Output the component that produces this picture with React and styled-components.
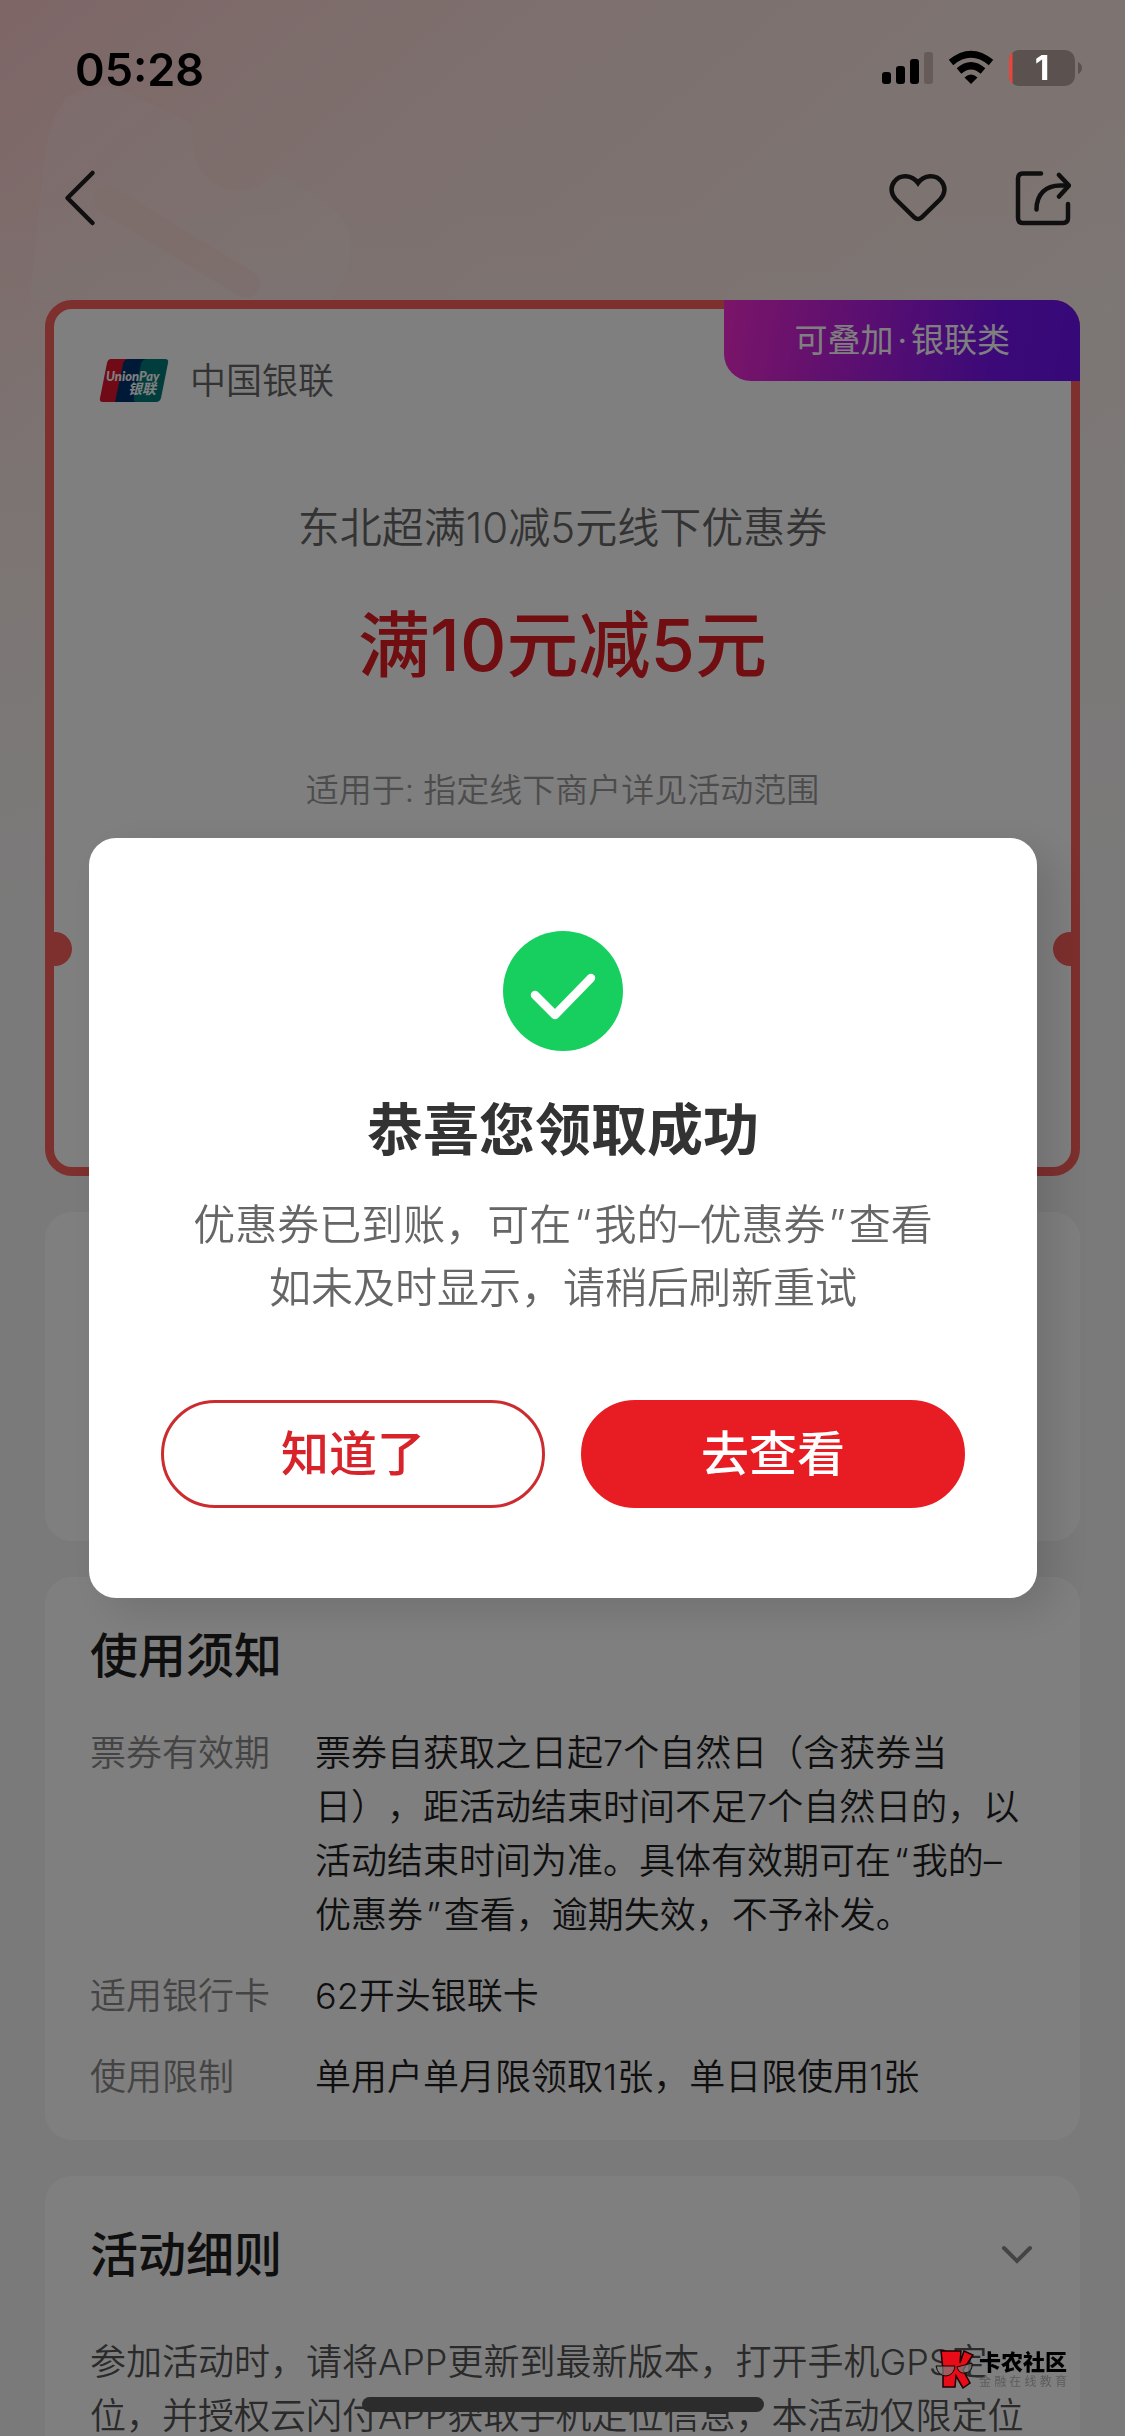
import React from "react";
import styled, { createGlobalStyle } from "styled-components";

const GlobalStyle = createGlobalStyle`
  * {
    box-sizing: border-box;
    margin: 0;
    padding: 0;
  }

  body {
    font-family: Inter, "Noto Sans CJK SC", sans-serif;
    font-weight: 350;
    text-spacing-trim: space-all;
    background-color: #f5f5f5;
  }

  button {
    font-family: inherit;
    cursor: pointer;
  }
`;

const Page = styled.div`
  position: relative;
  height: 100vh;
  overflow: hidden;
  padding: 132px 45px 0;
  background: linear-gradient(
      180deg,
      rgba(245, 245, 245, 0) 200px,
      rgba(245, 245, 245, 0.4) 500px,
      #f5f5f5 960px
    ),
    linear-gradient(140deg, #fdcbcd 0%, #fcd2d2 4%, #fbd9d6 8%, #fbe0dc 14%, #fbe8e3 28%, #f9ece8 38%, #f5f5f5 100%);
  background-color: #f5f5f5;
`;

const Ghost = styled.svg`
  position: absolute;
  top: 60px;
  left: 0;
`;

const NavBar = styled.header`
  position: relative;
  display: flex;
  align-items: center;
  justify-content: space-between;
  height: 132px;
  padding: 0 9px 0 18px;
`;

const NavGroup = styled.div`
  display: flex;
  gap: 66px;
`;

const IconButton = styled.button`
  display: flex;
  border: none;
  background: none;
  color: #1e1e1e;
`;

const Main = styled.main`
  position: relative;
  display: flex;
  flex-direction: column;
  gap: 36px;
  padding-top: 36px;
`;

const Coupon = styled.section`
  position: relative;
  border: 9px solid #fa605c;
  border-radius: 27px;
  background-color: white;
  text-align: center;
`;

const Tag = styled.span`
  position: absolute;
  top: -9px;
  right: -9px;
  display: flex;
  gap: 4px;
  padding: 0 70px;
  border-radius: 0 27px 0 27px;
  background: linear-gradient(100deg, #f62ad2 0%, #7814f0 75%, #6c12f0 100%);
  color: white;
  font-size: 33px;
  font-weight: 400;
  line-height: 81px;
`;

const Issuer = styled.div`
  display: flex;
  align-items: center;
  gap: 21px;
  padding: 45px 45px 0;
  color: #666;
  font-size: 36px;
  line-height: 54px;
`;

const CouponName = styled.p`
  margin-top: 88px;
  color: #666;
  font-size: 42px;
  line-height: 63px;
`;

const Discount = styled.h1`
  margin-top: 32px;
  color: #e21c23;
  font-size: 72px;
  font-weight: 500;
  line-height: 108px;
`;

const Scope = styled.p`
  margin-top: 64px;
  color: #999;
  font-size: 33px;
  line-height: 54px;
`;

const TearLine = styled.div`
  display: flex;
  justify-content: space-between;
  margin-top: 115px;
  margin-bottom: 201px;
`;

const Notch = styled.i`
  width: 18px;
  height: 34px;
  border-radius: ${(props) => (props.$right ? "18px 0 0 18px" : "0 18px 18px 0")};
  background-color: #fa605c;
`;

const Card = styled.section`
  min-height: ${(props) => props.$minHeight || "0"};
  padding: 45px 45px 36px;
  border-radius: 27px;
  background-color: white;
`;

const CardHeader = styled.div`
  display: flex;
  align-items: center;
  justify-content: space-between;
  margin-bottom: ${(props) => props.$space};
`;

const CardTitle = styled.h2`
  color: #1e1e1e;
  font-size: 48px;
  font-weight: 500;
  line-height: 68px;
`;

const Rules = styled.dl`
  display: grid;
  grid-template-columns: 180px 1fr;
  column-gap: 45px;
  row-gap: 27px;
  padding-right: 9px;
  font-size: 36px;
  line-height: 54px;
`;

const Term = styled.dt`
  color: #888;
`;

const Detail = styled.dd`
  color: #1e1e1e;
`;

const Paragraph = styled.p`
  color: #555;
  font-size: 36px;
  line-height: 54px;
`;

const Quote = styled.span`
  padding: 0 3px;
`;

const Overlay = styled.div`
  position: fixed;
  inset: 0;
  display: flex;
  align-items: center;
  justify-content: center;
  padding: 0 88px 0 89px;
  background-color: rgba(0, 0, 0, 0.5);
`;

const Modal = styled.div`
  display: flex;
  flex-direction: column;
  align-items: center;
  width: 100%;
  padding: 93px 72px 90px;
  border-radius: 27px;
  background-color: white;
  box-shadow: 18px 12px 42px rgba(0, 0, 0, 0.12);
`;

const ModalTitle = styled.h2`
  margin-top: 39px;
  color: #333;
  font-size: 56px;
  font-weight: 700;
  line-height: 81px;
`;

const ModalText = styled.p`
  margin-top: 22px;
  color: #666;
  font-size: 42px;
  line-height: 63px;
  text-align: center;
`;

const ModalActions = styled.div`
  display: flex;
  gap: 36px;
  width: 100%;
  margin-top: 81px;
`;

const Button = styled.button`
  flex: 1;
  height: 108px;
  border: 3px solid ${(props) => (props.$primary ? "#e81d23" : "#cc2b30")};
  border-radius: 54px;
  background-color: ${(props) => (props.$primary ? "#e81d23" : "white")};
  color: ${(props) => (props.$primary ? "white" : "#d9232b")};
  font-size: 48px;
  font-weight: 500;
  line-height: 102px;
`;

const StatusBar = styled.div`
  position: fixed;
  top: 0;
  left: 0;
  right: 0;
  display: flex;
  align-items: center;
  justify-content: space-between;
  height: 138px;
  padding: 0 42px 0 75px;
`;

const Time = styled.time`
  font-size: 45px;
  font-weight: 600;
  color: black;
`;

const HomeIndicator = styled.div`
  position: fixed;
  bottom: 24px;
  left: 50%;
  width: 402px;
  height: 15px;
  margin-left: -201px;
  border-radius: 8px;
  background-color: #2c2c2c;
`;

const Watermark = styled.div`
  position: fixed;
  right: 58px;
  bottom: 46px;
  display: flex;
  align-items: center;
  gap: 4px;
`;

const WatermarkName = styled.p`
  color: black;
  font-size: 22px;
  font-weight: 900;
  line-height: 24px;
`;

const WatermarkNote = styled.p`
  display: flex;
  justify-content: space-between;
  color: #5c5c5c;
  font-size: 12px;
  font-weight: 400;
  line-height: 16px;
`;

const SignalIcons = () => (
  <svg width="202" height="38" viewBox="0 0 202 38">
    <rect x="1" y="22" width="9" height="12" rx="3" />
    <rect x="15" y="16" width="9" height="18" rx="3" />
    <rect x="29" y="9" width="9" height="25" rx="3" />
    <rect x="43" y="2" width="9" height="32" rx="3" fill="#665b59" />
    <g fill="none" stroke="#000">
      <path d="M70 12.500 Q90 -4 110 12.500" strokeWidth="7" />
      <path d="M78 21 Q90 10.500 102 21" strokeWidth="7" />
    </g>
    <path d="M83.500 27.500 Q90 21.500 96.500 27.500 L90 34 Z" />
    <rect x="128" y="0" width="66" height="36" rx="10" fill="#5b5250" />
    <path d="M131.500 2 V34 Q128 31 128 26 V10 Q128 5 131.500 2Z" fill="#e8463c" />
    <path d="M197 12 Q201 14 201 18 Q201 22 197 24Z" fill="#5b5250" />
    <text
      x="161"
      y="30"
      fill="#fff"
      fontFamily="Inter, sans-serif"
      fontSize="34"
      fontWeight="700"
      textAnchor="middle"
    >
      1
    </text>
  </svg>
);

const BackIcon = () => (
  <svg width="34" height="58" viewBox="0 0 34 58" fill="none" stroke="currentColor" strokeWidth="4.500">
    <path d="M29.500 4 L4.500 29 L29.500 54" strokeLinecap="round" strokeLinejoin="round" />
  </svg>
);

const HeartIcon = () => (
  <svg width="60" height="56" viewBox="0 0 60 56" fill="none" stroke="currentColor" strokeWidth="4.500">
    <path
      d="M29 13 C23 4.500 11 4 5.500 11.500 C1 17 2 24 6.500 29 L25.500 47.500 Q29 50.500 32.500 47.500 L51.500 29 C56 24 57 17 52.500 11.500 C47 4 35 4.500 29 13Z"
      strokeLinejoin="miter"
    />
  </svg>
);

const ShareIcon = () => (
  <svg
    width="56"
    height="56"
    viewBox="0 0 56 56"
    fill="none"
    stroke="currentColor"
    strokeWidth="4.500"
    strokeLinecap="round"
    strokeLinejoin="round"
  >
    <path d="M26 3.500 H8 Q3 3.500 3 8.500 V48 Q3 53 8 53 H48 Q53 53 53 48 V34" />
    <path d="M21.500 39.500 C21.500 24 31 15.500 45 15.500 H53" />
    <path d="M44 5 L54 15.500 L44 26.500" />
  </svg>
);

const UnionPayLogo = () => (
  <svg width="70" height="44" viewBox="0 0 70 44">
    <path d="M12 0 H30 L20 43 H4 Q0 43 1 39 L8 4 Q9 0 12 0Z" fill="#e0142e" />
    <path d="M30 0 H49 L39 43 H16 L24 5 Q25 0 30 0Z" fill="#00336e" />
    <path d="M49 0 H66 Q70 0 69 4 L62 39 Q61 43 57 43 H37 Q34 43 35 38 L42 5 Q43 0 49 0Z" fill="#007b78" />
    <g fill="#fff" fontWeight="700">
      <text x="7" y="22" fontFamily="Lato, sans-serif" fontSize="13" fontStyle="italic" fontWeight="900">
        UnionPay
      </text>
      <text x="29" y="35" fontFamily="Noto Sans CJK SC, sans-serif" fontSize="14" fontStyle="italic">
        银联
      </text>
    </g>
  </svg>
);

const CheckIcon = () => (
  <svg width="120" height="120" viewBox="0 0 120 120">
    <circle cx="60" cy="60" r="60" fill="#17cf5f" />
    <path
      d="M32 64 L52 84 L88 47"
      fill="none"
      stroke="#fff"
      strokeWidth="8.500"
      strokeLinecap="round"
      strokeLinejoin="round"
    />
  </svg>
);

const ChevronIcon = () => (
  <svg width="36" height="20" viewBox="-3 0 36 20" fill="none" stroke="#888" strokeWidth="4">
    <path d="M2 3 L15 16 L28 3" strokeLinecap="round" />
  </svg>
);

const MascotIcon = () => (
  <svg width="40" height="40" viewBox="0 0 40 40" stroke="#1a0000" strokeWidth="1.500">
    <path d="M6 1 L26 1 L25 13 L29 1 L38 5 L28 20 L35 33 L28 38 L21 26 L20 37 L8 37 L8 20 Z" fill="#e80c18" />
    <path d="M1 16 Q3 26 11 26 Q19 25 20 16 Z M22 17 Q24 24 30 23 Q38 22 37 13 Z" fill="#808080" fillOpacity="0.700" strokeWidth="1" />
  </svg>
);

function App() {
  return (
    <>
      <GlobalStyle />
      <Page>
        <Ghost width="400" height="240" viewBox="0 60 400 240" fill="#fff" fillOpacity="0.140">
          <path d="M30 300 L42 180 Q50 92 84 90 Q108 82 130 94 L193 124 Q188 172 222 188 Q252 198 276 173 L322 199 Q356 224 351 255 Q348 275 330 300Z" />
          <path d="M108 200 L246 284" stroke="#fbd8d3" strokeOpacity="0.600" strokeWidth="28" strokeLinecap="round" />
        </Ghost>
        <NavBar>
          <IconButton aria-label="返回">
            <BackIcon />
          </IconButton>
          <NavGroup>
            <IconButton aria-label="收藏">
              <HeartIcon />
            </IconButton>
            <IconButton aria-label="分享">
              <ShareIcon />
            </IconButton>
          </NavGroup>
        </NavBar>

        <Main>
          <Coupon>
            <Tag>
              <span>可叠加</span>
              <span>·</span>
              <span>银联类</span>
            </Tag>
            <Issuer>
              <UnionPayLogo />
              中国银联
            </Issuer>
            <CouponName>东北超满10减5元线下优惠券</CouponName>
            <Discount>满10元减5元</Discount>
            <Scope>适用于: 指定线下商户详见活动范围</Scope>
            <TearLine>
              <Notch />
              <Notch $right />
            </TearLine>
          </Coupon>

          <Card $minHeight="329px" />

          <Card>
            <CardHeader $space="36px">
              <CardTitle>使用须知</CardTitle>
            </CardHeader>
            <Rules>
              <Term>票券有效期</Term>
              <Detail>
                票券自获取之日起7个自然日（含获券当日），距活动结束时间不足7个自然日的，以活动结束时间为准。具体有效期可在
                <Quote>“</Quote>我的–优惠券<Quote>”</Quote>查看，逾期失效，不予补发。
              </Detail>
              <Term>适用银行卡</Term>
              <Detail>62开头银联卡</Detail>
              <Term>使用限制</Term>
              <Detail>单用户单月限领取1张，单日限使用1张</Detail>
            </Rules>
          </Card>

          <Card>
            <CardHeader $space="46px">
              <CardTitle>活动细则</CardTitle>
              <IconButton aria-label="展开">
                <ChevronIcon />
              </IconButton>
            </CardHeader>
            <Paragraph>
              参加活动时，请将APP更新到最新版本，打开手机GPS定位，并授权云闪付APP获取手机定位信息，本活动仅限定位
            </Paragraph>
          </Card>
        </Main>
      </Page>

      <Overlay>
        <Modal role="dialog" aria-modal="true">
          <CheckIcon />
          <ModalTitle>恭喜您领取成功</ModalTitle>
          <ModalText>
            优惠券已到账，可在<Quote>“</Quote>我的–优惠券<Quote>”</Quote>查看
            <br />
            如未及时显示，请稍后刷新重试
          </ModalText>
          <ModalActions>
            <Button>知道了</Button>
            <Button $primary>去查看</Button>
          </ModalActions>
        </Modal>
      </Overlay>

      <StatusBar>
        <Time>05:28</Time>
        <SignalIcons />
      </StatusBar>
      <HomeIndicator />
      <Watermark>
        <MascotIcon />
        <div>
          <WatermarkName>卡农社区</WatermarkName>
          <WatermarkNote>
            {[..."金融在线教育"].map((char) => (
              <span key={char}>{char}</span>
            ))}
          </WatermarkNote>
        </div>
      </Watermark>
    </>
  );
}

export default App;
